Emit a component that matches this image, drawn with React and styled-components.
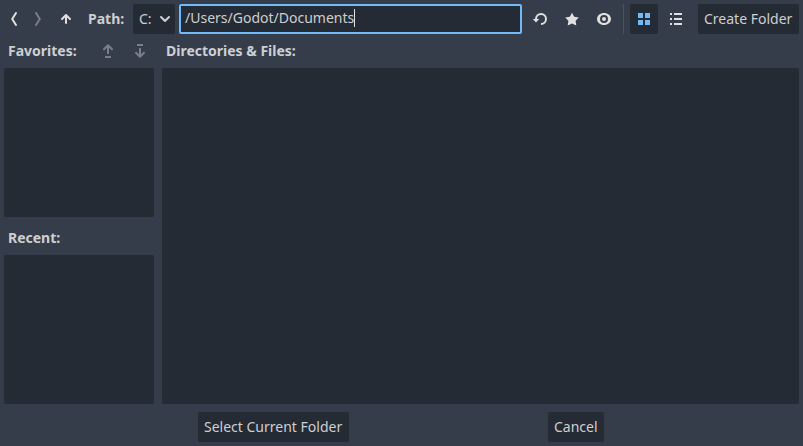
import React from "react";
import styled, { createGlobalStyle } from "styled-components";

const GlobalStyle = createGlobalStyle`
  * { box-sizing: border-box; }
  body { margin: 0; background: #363d4a; overflow: hidden; }
`;

const Dialog = styled.main`
  width: 803px;
  height: 446px;
  padding: 4px;
  display: flex;
  flex-direction: column;
  background: #363d4a;
  color: #cdcfd2;
  font: 14px/20px "Noto Sans", sans-serif;
`;

const Toolbar = styled.header`
  display: flex;
  height: 30px;
  flex: none;
`;

const Button = styled.button`
  display: flex;
  align-items: center;
  justify-content: center;
  width: ${(p) => p.$width}px;
  height: 30px;
  flex: none;
  margin: 0 0 0 ${(p) => p.$gap || 0}px;
  padding: 0;
  border: 0;
  border-radius: 2px;
  background: ${(p) => (p.$flat ? "transparent" : "#252b34")};
  color: ${(p) => (p.$active ? "#70bafa" : p.$flat ? "#e0e0e0" : "#cdcfd2")};
  opacity: ${(p) => (p.$dim ? 0.4 : 1)};
  font: inherit;
  white-space: nowrap;
`;

const TextButton = styled(Button)`
  justify-content: flex-start;
  padding-left: 6px;
`;

const PathLabel = styled.label`
  width: 41px;
  margin: 5px 0 0 8px;
  font-weight: 700;
`;

const DriveButton = styled(Button)`
  justify-content: space-between;
  padding: 0 2px 0 6px;
`;

const PathField = styled.div`
  display: flex;
  align-items: center;
  width: 343px;
  height: 30px;
  margin-left: 4px;
  padding: 0 0 3px 4px;
  border: 2px solid #70bafa;
  border-radius: 2px;
  background: #252b34;
  line-height: 19px;
`;

const Caret = styled.span`
  width: 1px;
  height: 18px;
  margin-top: 1px;
  background: #e0e0e0;
`;

const Separator = styled.div`
  width: 1px;
  height: 30px;
  margin: 0 6px 0 5px;
  background: #4b515d;
`;

const Content = styled.section`
  display: grid;
  grid-template-columns: 150px 637px;
  column-gap: 8px;
  height: 370px;
  flex: none;
`;

const Column = styled.div`
  display: flex;
  flex-direction: column;
`;

const Heading = styled.div`
  display: flex;
  align-items: center;
  height: ${(p) => p.$height}px;
  padding: ${(p) => p.$top || 0}px 0 0 4px;
  font-weight: 700;
`;

const HeadingText = styled.span`
  flex: 1;
`;

const ListPanel = styled.div`
  height: ${(p) => p.$height}px;
  border-radius: 2px;
  background: #252b34;
`;

const Footer = styled.footer`
  display: flex;
  margin-top: 8px;
  padding-left: 194px;
`;

const Icon = styled.svg`
  display: block;
  width: ${(p) => p.$width || 16}px;
  height: 16px;
  flex: none;
  fill: none;
  stroke: currentColor;
  stroke-width: 2;
`;

export default function App() {
  return (
    <Dialog>
      <GlobalStyle />
      <Toolbar>
        <Button $flat $width={20} aria-label="Back">
          <Icon $width={8} viewBox="0 0 8 16"><path d="M6 2 2.2 8 6 14" strokeLinecap="round" strokeLinejoin="round" /></Icon>
        </Button>
        <Button $flat $dim $width={20} $gap={4} aria-label="Forward">
          <Icon $width={8} viewBox="0 0 8 16"><path d="M2 2 5.8 8 2 14" strokeLinecap="round" strokeLinejoin="round" /></Icon>
        </Button>
        <Button $flat $width={28} $gap={4} aria-label="Parent folder">
          <Icon viewBox="0 0 16 16">
            <path d="M8 12.7V4" />
            <path d="M4 8l4-4 4 4" strokeLinecap="round" strokeLinejoin="round" />
          </Icon>
        </Button>
        <PathLabel>Path:</PathLabel>
        <DriveButton $width={42} $gap={4}>
          C:
          <Icon viewBox="0 0 16 16"><path d="m4 6 4 4 4-4" strokeLinecap="round" strokeLinejoin="round" /></Icon>
        </DriveButton>
        <PathField>/Users/Godot/Documents<Caret /></PathField>
        <Button $flat $width={28} $gap={4} aria-label="Refresh">
          <Icon viewBox="0 0 16 16">
            <path d="M4 8a5 5 0 1 1 5 5" />
            <path d="M.8 8h6.4L4 11.5z" fill="currentColor" stroke="none" />
          </Icon>
        </Button>
        <Button $flat $width={28} $gap={4} aria-label="Favorite">
          <Icon viewBox="0 0 16 16">
            <path d="m8 1.7 2.2 4 4.6.9-3.2 3.2.7 4.7L8 12.6l-4.3 1.9.7-4.7-3.2-3.2 4.6-.9z" fill="currentColor" stroke="none" />
          </Icon>
        </Button>
        <Button $flat $width={28} $gap={4} aria-label="Hidden files">
          <Icon viewBox="0 0 16 16">
            <path d="M8 2C4.2 2 1 4.6 1 8s3.200 6 7 6 7-2.600 7-6-3.200-6-7-6zm0 2a4 4 0 0 1 0 8 4 4 0 0 1 0-8z" fill="currentColor" fillRule="evenodd" stroke="none" />
            <circle cx="8" cy="8" r="2" fill="currentColor" stroke="none" />
          </Icon>
        </Button>
        <Separator />
        <Button $active $width={28} aria-label="Thumbnails">
          <Icon viewBox="0 0 16 16">
            <path d="M2 2h5v5H2zm7 0h5v5H9zM2 9h5v5H2zm7 0h5v5H9z" fill="currentColor" stroke="none" />
          </Icon>
        </Button>
        <Button $flat $width={28} $gap={4} aria-label="List">
          <Icon viewBox="0 0 16 16"><path d="M2 3h2m2 0h8M2 8h2m2 0h8M2 13h2m2 0h8" /></Icon>
        </Button>
        <TextButton $width={101} $gap={8}>Create Folder</TextButton>
      </Toolbar>
      <Content>
        <Column>
          <Heading $height={34}>
            <HeadingText>Favorites:</HeadingText>
            <Button $flat $dim $width={28} aria-label="Move up">
              <Icon viewBox="0 0 16 16">
                <path d="M8 11V3M5 14h6" />
                <path d="M4 6.300 8 2.300l4 4" strokeLinecap="round" strokeLinejoin="round" />
              </Icon>
            </Button>
            <Button $flat $dim $width={28} $gap={4} aria-label="Move down">
              <Icon viewBox="0 0 16 16">
                <path d="M8 5v8M5 2h6" />
                <path d="m4 9.700 4 4 4-4" strokeLinecap="round" strokeLinejoin="round" />
              </Icon>
            </Button>
          </Heading>
          <ListPanel $height={149} />
          <Heading $height={38} $top={4}><HeadingText>Recent:</HeadingText></Heading>
          <ListPanel $height={149} />
        </Column>
        <Column>
          <Heading $height={34}><HeadingText>Directories &amp; Files:</HeadingText></Heading>
          <ListPanel $height={336} />
        </Column>
      </Content>
      <Footer>
        <TextButton $width={151}>Select Current Folder</TextButton>
        <TextButton $width={56} $gap={199}>Cancel</TextButton>
      </Footer>
    </Dialog>
  );
}
